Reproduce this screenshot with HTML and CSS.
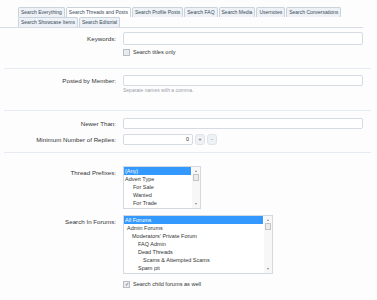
FILE: index.html
```html
<!DOCTYPE html>
<html lang="en">
<head>
  <meta charset="UTF-8">
  <title>Search Threads and Posts</title>
  <link rel="stylesheet" href="styles.css">
</head>
<body>
  <ul class="tabs">
    <li>Search Everything</li>
    <li class="active">Search Threads and Posts</li>
    <li>Search Profile Posts</li>
    <li>Search FAQ</li>
    <li>Search Media</li>
    <li>Usernotes</li>
    <li>Search Conversations</li>
    <li>Search Showcase Items</li>
    <li>Search Editorial</li>
  </ul>

  <form class="search">
    <div class="unit first">
      <label class="lbl">Keywords:</label>
      <div class="ctrl">
        <div class="text"></div>
        <div class="check"><span class="box"></span>Search titles only</div>
      </div>
    </div>

    <div class="sep s1"></div>

    <div class="unit member">
      <label class="lbl">Posted by Member:</label>
      <div class="ctrl">
        <div class="text"></div>
        <p class="hint">Separate names with a comma.</p>
      </div>
    </div>

    <div class="sep s2"></div>

    <div class="unit newer">
      <label class="lbl">Newer Than:</label>
      <div class="ctrl"><div class="text"></div></div>
    </div>

    <div class="unit replies">
      <label class="lbl">Minimum Number of Replies:</label>
      <div class="ctrl spin">
        <div class="text num">0</div>
        <span class="btn">+</span>
        <span class="btn">-</span>
      </div>
    </div>

    <div class="sep s3"></div>

    <div class="unit prefixes">
      <label class="lbl top">Thread Prefixes:</label>
      <div class="ctrl">
        <div class="list small">
          <ul class="items">
            <li class="sel">(Any)</li>
            <li>Advert Type</li>
            <li class="d2">For Sale</li>
            <li class="d2">Wanted</li>
            <li class="d2">For Trade</li>
          </ul>
          <div class="bar"><span class="up"></span><span class="thumb"></span><span class="down"></span></div>
        </div>
      </div>
    </div>

    <div class="unit forums">
      <label class="lbl top">Search In Forums:</label>
      <div class="ctrl">
        <div class="list big">
          <ul class="items">
            <li class="sel">All Forums</li>
            <li class="l1">Admin Forums</li>
            <li class="l2">Moderators' Private Forum</li>
            <li class="l3">FAQ Admin</li>
            <li class="l3">Dead Threads</li>
            <li class="l4">Scams &amp; Attempted Scams</li>
            <li class="l3">Spam pit</li>
          </ul>
          <div class="bar"><span class="up"></span><span class="thumb"></span><span class="down"></span></div>
        </div>
        <div class="check last"><span class="box on">&#10003;</span>Search child forums as well</div>
      </div>
    </div>
  </form>
</body>
</html>
```

FILE: styles.css
```css
body { margin: 0; background: #fdfdfe; font-family: "Liberation Sans", Arial, sans-serif; color: #333; }

.tabs { list-style: none; margin: 0; padding: 7px 0 0 18px; display: flex; flex-wrap: wrap; width: 345px; border-bottom: 1px solid #d6dde6; }
.tabs li { font-size: 5px; line-height: 9px; height: 9px; padding: 0 2px; border: 1px solid #c9d3de; border-bottom: 0; margin-right: 1px; background: #eef2f6; color: #3a4a5a; border-radius: 2px 2px 0 0; white-space: nowrap; }
.tabs li.active { background: #fff; }

.search { width: 377px; }
.unit { display: grid; grid-template-columns: 116px 240px; column-gap: 7px; align-items: start; }
.lbl { text-align: right; font-size: 6.2px; line-height: 11px; color: #333; }
.lbl.top { line-height: 9px; padding-top: 2px; }
.ctrl { display: flex; flex-direction: column; }

.text { height: 11px; box-sizing: border-box; border: 1px solid #d4dbe4; border-radius: 2px; background: #fff; }
.first { margin-top: 4px; }
.first .text { height: 13px; }
.first .lbl { line-height: 13px; }

.check { display: flex; align-items: center; gap: 3px; margin-top: 4px; font-size: 5.6px; line-height: 7px; color: #333; }
.box { width: 5px; height: 5px; border: 1px solid #b9bec5; background: #e9ebee; font-size: 5px; line-height: 5px; text-align: center; color: #555; }
.check.last { margin-top: 7px; }

.sep { height: 1px; background: #e6ebf1; margin-left: 4px; margin-right: 6px; }
.s1 { margin-top: 12px; }
.s2 { margin-top: 16px; }
.s3 { margin-top: 7px; }

.member { margin-top: 6px; }
.hint { margin: 1px 0 0; font-size: 5px; line-height: 7px; color: #9aa0a8; }

.newer { margin-top: 7px; }
.replies { margin-top: 5px; }
.spin { flex-direction: row; align-items: center; gap: 2px; }
.num { width: 70px; text-align: right; padding-right: 3px; font-size: 5.5px; line-height: 9px; }
.btn { width: 8px; height: 9px; border: 1px solid #dfe4ea; border-radius: 3px; background: #eef1f5; font-size: 5px; line-height: 9px; text-align: center; color: #555; }

.prefixes { margin-top: 13px; }
.forums { margin-top: 6px; }

.list { display: flex; border: 1px solid #d3d9e1; background: #fff; box-sizing: border-box; }
.list.small { width: 78px; height: 43px; }
.list.big { width: 150px; height: 59px; }
.items { list-style: none; margin: 0; padding: 0; flex: 1; }
.items li { font-size: 5.5px; line-height: 8px; height: 8px; padding-left: 1px; color: #333; white-space: nowrap; }
.items li.sel { background: #3399ff; color: #fff; margin-right: 1px; }
.items .d2 { padding-left: 9px; }
.items .l1 { padding-left: 3px; }
.items .l2 { padding-left: 8px; }
.items .l3 { padding-left: 14px; }
.items .l4 { padding-left: 19px; }

.bar { width: 8px; display: flex; flex-direction: column; align-items: center; background: #f7f7f7; }
.up, .down { width: 0; height: 0; border-left: 1.5px solid transparent; border-right: 1.5px solid transparent; }
.up { border-bottom: 2px solid #8a8a8a; margin-top: 3px; }
.down { border-top: 2px solid #8a8a8a; margin-top: auto; margin-bottom: 3px; }
.thumb { width: 6px; height: 7px; margin-top: 2px; border: 1px solid #c4c4c4; background: #ececec; box-sizing: border-box; }
```
